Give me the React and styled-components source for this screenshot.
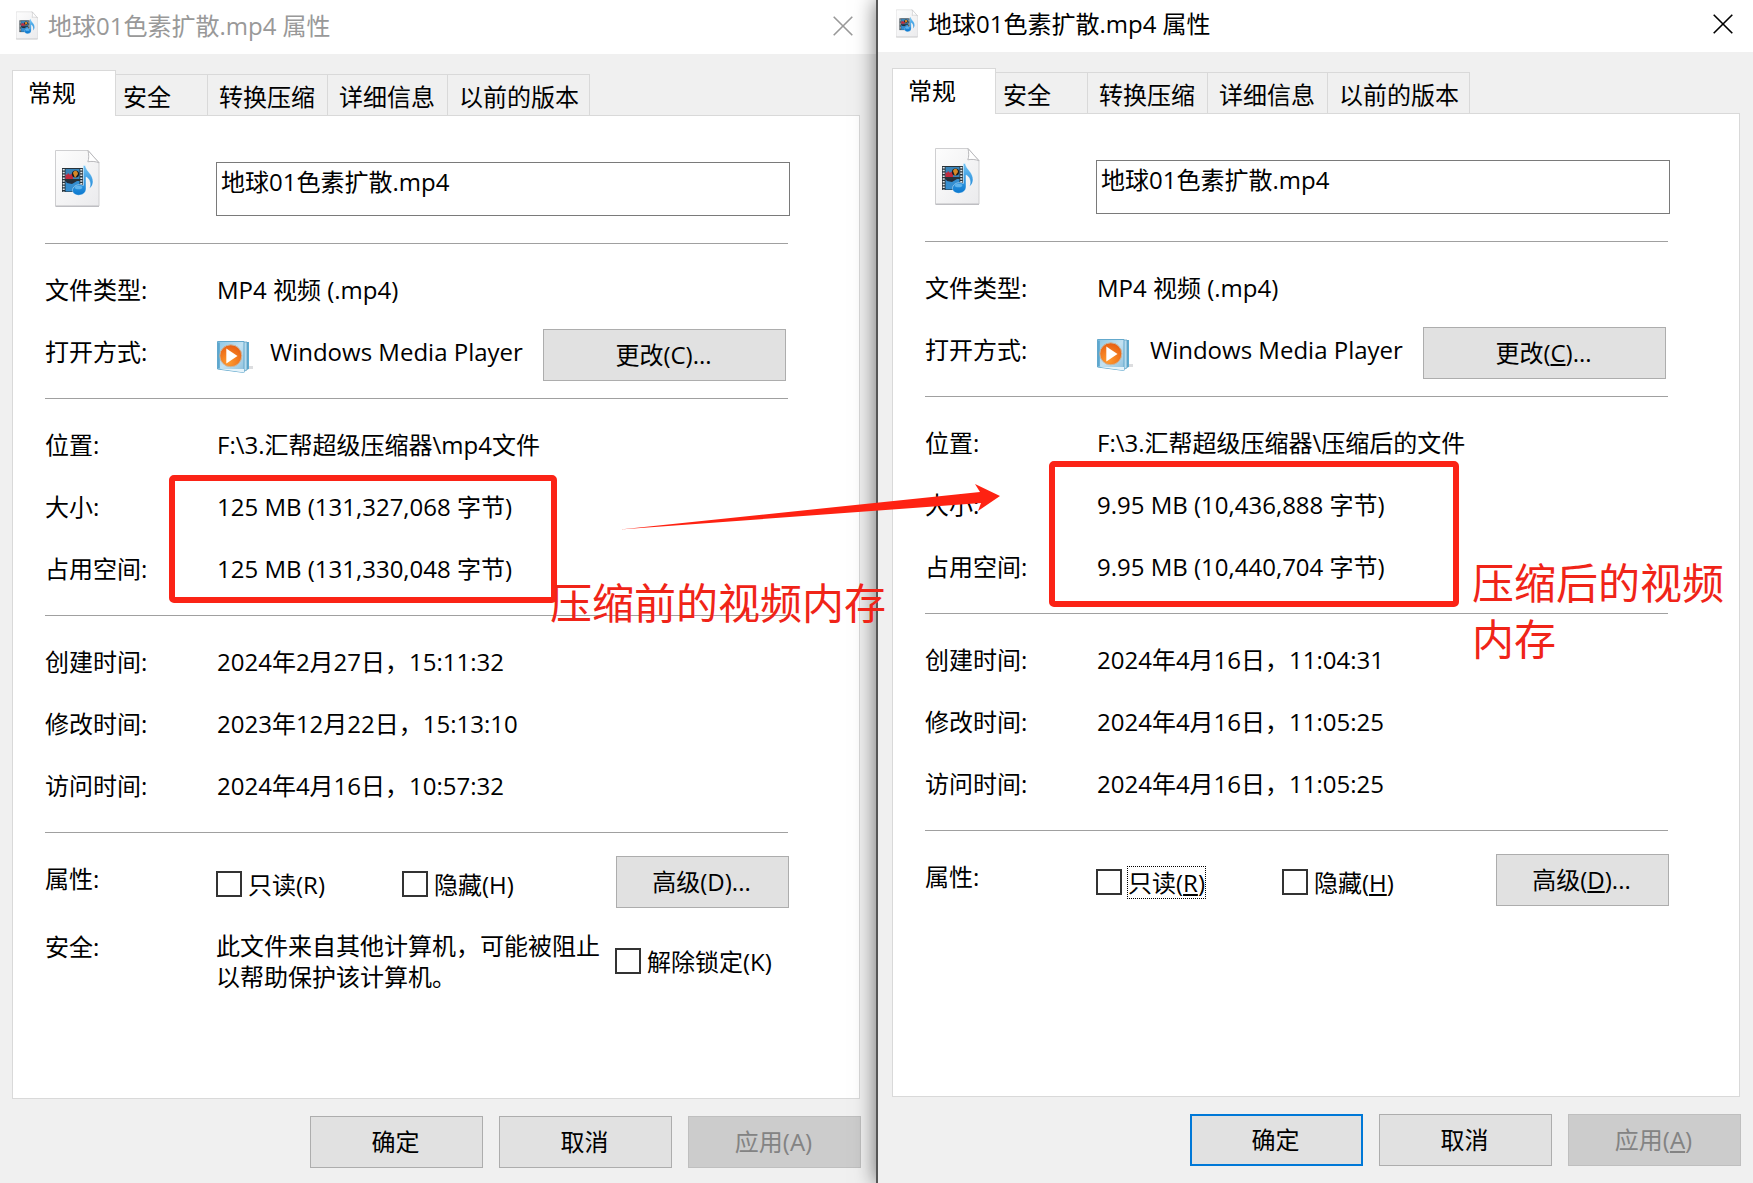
import React, { useState } from 'react';
import styled, { createGlobalStyle } from 'styled-components';

const GlobalStyle = createGlobalStyle`
  * {
    box-sizing: border-box;
  }
  body {
    margin: 0;
    background-color: #f0f0f0;
  }
  body, button, input {
    font-family: 'Open Sans', 'Noto Sans CJK SC', sans-serif;
    font-size: 24px;
    line-height: 32px;
    color: #000;
  }
`;

const Desktop = styled.div`
  display: grid;
  grid-template-columns: 876fr 877fr;
  min-height: 100vh;
  overflow: hidden;
`;

const Window = styled.section`
  display: flex;
  flex-direction: column;
  min-width: 0;
  background-color: #f0f0f0;
  padding-bottom: ${({ $active }) => ($active ? 17 : 15)}px;
  ${({ $active }) =>
    $active &&
    `
    position: relative;
    z-index: 1;
    border-left: 2px solid #565656;
    box-shadow: 0 0 20px rgba(0, 0, 0, 0.55);
  `}
`;

const TitleBar = styled.header`
  display: flex;
  align-items: center;
  height: ${({ $active }) => ($active ? 52 : 54)}px;
  padding: ${({ $active }) => ($active ? '0 20px 5px 18px' : '0 23px 3px 16px')};
  background-color: #fff;
  color: ${({ $active }) => ($active ? '#000' : '#999')};
`;

const Title = styled.h1`
  flex: 1;
  margin: 0 0 0 10px;
  font-size: 24px;
  font-weight: 400;
`;

const CloseButton = styled.button`
  display: flex;
  padding: 0;
  border: none;
  background: none;
  color: inherit;
  cursor: pointer;
`;

const WindowBody = styled.div`
  flex: 1;
  display: flex;
  flex-direction: column;
  padding: ${({ $active }) => ($active ? '16px 13px 0 14px' : '16px 16px 0 12px')};
`;

const TabList = styled.div`
  display: flex;
  align-items: flex-end;
`;

const Tab = styled.button`
  width: ${({ $width }) => $width}px;
  height: 41px;
  padding: 4px 0 0 ${({ $inset }) => $inset}px;
  border: 1px solid #d9d9d9;
  border-left: none;
  border-bottom: none;
  background-color: #f0f0f0;
  text-align: left;
  white-space: nowrap;
  cursor: pointer;
  &[aria-selected='true'] {
    position: relative;
    height: 46px;
    margin-bottom: -1px;
    padding-bottom: 6px;
    border-left: 1px solid #d9d9d9;
    background-color: #fff;
  }
`;

const Panel = styled.div`
  flex: 1;
  padding: 0 71px 0 32px;
  border: 1px solid #d9d9d9;
  background-color: #fff;
`;

const FileHeader = styled.div`
  display: grid;
  grid-template-columns: 171px 1fr;
  align-items: start;
  padding: 34px 0 27px;
  border-bottom: 1px solid #a0a0a0;
  svg {
    margin-left: 10px;
  }
`;

const NameInput = styled.input`
  justify-self: stretch;
  height: 54px;
  margin: 12px -2px 0 0;
  padding: 0 4px 17px;
  border: 1px solid #7a7a7a;
  border-radius: 0;
  outline: none;
`;

const Group = styled.div`
  position: relative;
  padding: 15px 0;
  border-bottom: 1px solid #a0a0a0;
  &:last-child {
    border-bottom: none;
  }
`;

const Row = styled.div`
  display: grid;
  grid-template-columns: 171px 1fr;
  align-items: start;
  line-height: 62px;
`;

const Value = styled.span`
  padding-left: 1px;
  white-space: nowrap;
`;

const OpenWith = styled.div`
  display: flex;
  align-items: center;
  height: 62px;
  padding: 6px 2px 0 1px;
  svg {
    flex: none;
    margin: 4px 17px 0 0;
  }
`;

const AppName = styled.span`
  flex: 1;
  min-width: 0;
  margin-right: 15px;
  padding-bottom: 6px;
  overflow: hidden;
  line-height: 32px;
  white-space: nowrap;
`;

const Attributes = styled.div`
  display: grid;
  grid-template-columns: 186px 1fr auto;
  align-items: center;
  height: 68px;
  margin-right: -1px;
  label {
    padding-top: 4px;
  }
`;

const Security = styled.div`
  display: grid;
  grid-template-columns: 1fr 173px;
  gap: 15px;
  align-items: center;
  padding: 14px 0;
  line-height: 31px;
`;

const SecurityText = styled.p`
  margin: 0;
`;

const CheckLabel = styled.label`
  display: flex;
  align-items: center;
  gap: 5px;
  line-height: 31px;
  white-space: nowrap;
`;

const CheckBox = styled.input`
  flex: none;
  appearance: none;
  width: 26px;
  height: 26px;
  margin: 0;
  border: 2px solid #333;
  background-color: #fff;
  &:checked {
    box-shadow: inset 0 0 0 4px #fff;
    background-color: #333;
  }
`;

const CheckText = styled.span`
  border: 1px dotted ${({ $focused }) => ($focused ? '#000' : 'transparent')};
`;

const Button = styled.button`
  width: ${({ $wide }) => ($wide ? 243 : 173)}px;
  height: 52px;
  flex: none;
  padding: 0 2px 0 0;
  border: ${({ $primary }) => ($primary ? '2px solid #0078d7' : '1px solid #adadad')};
  background-color: #e1e1e1;
  cursor: pointer;
  &:disabled {
    border-color: #bfbfbf;
    background-color: #ccc;
    color: #838383;
    cursor: default;
  }
`;

const Footer = styled.footer`
  display: flex;
  justify-content: flex-end;
  gap: 16px;
  padding: 17px ${({ $active }) => ($active ? 12 : 15)}px 0 0;
`;

const Frame = styled.div`
  position: absolute;
  z-index: 2;
  left: 124px;
  top: ${({ $top }) => $top}px;
  width: ${({ $width }) => $width}px;
  height: ${({ $height }) => $height}px;
  border: 6px solid #fb2316;
  border-radius: 5px;
  pointer-events: none;
`;

const Note = styled.p`
  position: absolute;
  z-index: 2;
  left: ${({ $left }) => $left}px;
  top: ${({ $top }) => $top}px;
  width: ${({ $width }) => $width}px;
  margin: 0;
  font-size: 42px;
  line-height: 56px;
  color: #f02418;
`;

const Arrow = styled.svg`
  position: absolute;
  z-index: 2;
  left: 575px;
  top: 80px;
  pointer-events: none;
`;

const MediaFileIcon = ({ width, height }) => (
  <svg width={width} height={height} viewBox="0 0 45 57" aria-hidden="true">
    <defs>
      <linearGradient id="paper" x1="0" y1="0" x2="1" y2="1">
        <stop offset="0" stopColor="#fdfdfd" />
        <stop offset="1" stopColor="#ebebed" />
      </linearGradient>
      <linearGradient id="note" x1="0" y1="0" x2="0" y2="1">
        <stop offset="0" stopColor="#72c4f5" />
        <stop offset="1" stopColor="#0a78cf" />
      </linearGradient>
    </defs>
    <path d="M.5.5H33L44 12.500V56H.5Z" fill="url(#paper)" stroke="#cfcfd1" />
    <path d="M.5 56.300H44" stroke="#b5b5b8" />
    <path d="M33 .5C34 5 34 9 32.800 11.800C37 11 41 11.500 44 12.800Z" fill="#fff" stroke="#b9b9bc" />
    <path d="M7 18H28V42H7Z" fill="#273239" />
    <path d="M10.500 19H24.500V29H10.500Z" fill="#3a84b8" />
    <path d="M10.500 31H24.500V41.500H10.500Z" fill="#358ed0" />
    <path d="M10.500 24L12 25L13 23L15 25L16.500 23.500L18 26V29H10.500Z" fill="#c22b3e" />
    <circle cx="20.500" cy="24" r="3.600" fill="#1c1a20" />
    <path d="M18 23C19 20 22.500 20 23 24L20 28Z" fill="#d78927" />
    <path d="M10.500 31H22L17 34L12 33Z" fill="#252e3b" />
    <path d="M8.700 19V42M26.300 19V42" stroke="#e2e9ed" strokeWidth="2" strokeDasharray="1.500 1.300" />
    <path
      d="M28.300 15.500H30.300C31 21.500 38.300 24 38 32C37.800 35 36.500 37 34.600 38.500C36.500 32 34 28.500 31 27V39C31 42.500 27.500 45.200 23.500 45.200C20 45.200 17.500 43.200 17.500 40.300C17.500 37 21 34.600 24.700 34.600C26.200 34.600 27.500 35 28.300 35.500Z"
      fill="url(#note)"
      stroke="#fff"
      strokeWidth=".4"
    />
    <ellipse cx="23.500" cy="37.500" rx="3.800" ry="1.800" fill="#9bdcff" opacity=".5" />
  </svg>
);

const PlayerIcon = () => (
  <svg width="36" height="32" viewBox="0 0 36 32" aria-hidden="true">
    <defs>
      <linearGradient id="cover" x1="0" y1="0" x2="1" y2="1">
        <stop offset="0" stopColor="#8cc6e4" />
        <stop offset=".5" stopColor="#c3e2f2" />
        <stop offset="1" stopColor="#8dbfdc" />
      </linearGradient>
      <radialGradient id="disc" cx=".4" cy=".8" r=".8">
        <stop offset="0" stopColor="#ff9b2f" />
        <stop offset="1" stopColor="#e85f13" />
      </radialGradient>
    </defs>
    <path d="M30 25H36V28H30Z" fill="#dcdddf" />
    <path d="M25 1H32V28L25 30Z" fill="#5fa9ce" />
    <path d="M25 1H30V29L25 31Z" fill="#b8dcee" stroke="#5398bd" strokeWidth=".7" />
    <path d="M.5 .5H27V31.500L.5 28Z" fill="url(#cover)" stroke="#64a9cd" />
    <path d="M1.800 1.500V27.500" stroke="#5ca7cf" strokeWidth="2" />
    <path d="M3 28L27 28V31.500Z" fill="#e5f3fa" />
    <circle cx="13.800" cy="14.800" r="11" fill="url(#disc)" stroke="#c8b5a0" />
    <path d="M9.300 7.500L20.500 15L9.300 22.500Z" fill="#fff" />
  </svg>
);

const CloseIcon = () => (
  <svg width="20" height="20" viewBox="0 0 20 20" stroke="currentColor" strokeWidth="1.600">
    <path d="M.7.7L19.300 19.300M19.300.7L.7 19.300" />
  </svg>
);

const tabs = [
  { name: '常规', width: 104, inset: 15 },
  { name: '安全', width: 92, inset: 7 },
  { name: '转换压缩', width: 120, inset: 11 },
  { name: '详细信息', width: 120, inset: 11 },
  { name: '以前的版本', width: 142, inset: 11 },
];

// The access key is underlined only in the focused window
const AccessKey = ({ letter, active }) => <>({active ? <u>{letter}</u> : letter})</>;

const InfoRow = ({ label, value }) => (
  <Row>
    <span>{label}:</span>
    <Value>{value}</Value>
  </Row>
);

const PropertiesWindow = ({ active, file, blocked, children }) => {
  const [tab, setTab] = useState('常规');
  const [name, setName] = useState('地球01色素扩散.mp4');

  return (
    <Window $active={active}>
      <TitleBar $active={active}>
        <MediaFileIcon width={22} height={29} />
        <Title>地球01色素扩散.mp4 属性</Title>
        <CloseButton aria-label="关闭">
          <CloseIcon />
        </CloseButton>
      </TitleBar>
      <WindowBody $active={active}>
        <TabList role="tablist">
          {tabs.map((t) => (
            <Tab
              key={t.name}
              role="tab"
              aria-selected={tab === t.name}
              onClick={() => setTab(t.name)}
              $width={t.width}
              $inset={t.inset}
            >
              {t.name}
            </Tab>
          ))}
        </TabList>
        <Panel role="tabpanel">
          <FileHeader>
            <MediaFileIcon width={45} height={57} />
            <NameInput aria-label="文件名" value={name} onChange={(e) => setName(e.target.value)} />
          </FileHeader>
          <Group>
            <InfoRow label="文件类型" value="MP4 视频 (.mp4)" />
            <Row>
              <span>打开方式:</span>
              <OpenWith>
                <PlayerIcon />
                <AppName>Windows Media Player</AppName>
                <Button $wide>
                  更改<AccessKey letter="C" active={active} />...
                </Button>
              </OpenWith>
            </Row>
          </Group>
          <Group>
            <InfoRow label="位置" value={file.path} />
            <InfoRow label="大小" value={file.size} />
            <InfoRow label="占用空间" value={file.sizeOnDisk} />
            {children}
          </Group>
          <Group>
            <InfoRow label="创建时间" value={file.created} />
            <InfoRow label="修改时间" value={file.modified} />
            <InfoRow label="访问时间" value={file.accessed} />
          </Group>
          <Group>
            <Row>
              <span>属性:</span>
              <Attributes>
                <CheckLabel>
                  <CheckBox type="checkbox" />
                  <CheckText $focused={active}>
                    只读<AccessKey letter="R" active={active} />
                  </CheckText>
                </CheckLabel>
                <CheckLabel>
                  <CheckBox type="checkbox" />
                  <CheckText>
                    隐藏<AccessKey letter="H" active={active} />
                  </CheckText>
                </CheckLabel>
                <Button>
                  高级<AccessKey letter="D" active={active} />...
                </Button>
              </Attributes>
            </Row>
            {blocked && (
              <Row>
                <span>安全:</span>
                <Security>
                  <SecurityText>此文件来自其他计算机，可能被阻止以帮助保护该计算机。</SecurityText>
                  <CheckLabel>
                    <CheckBox type="checkbox" />
                    <CheckText>
                      解除锁定<AccessKey letter="K" active={active} />
                    </CheckText>
                  </CheckLabel>
                </Security>
              </Row>
            )}
          </Group>
        </Panel>
      </WindowBody>
      <Footer $active={active}>
        <Button $primary={active}>确定</Button>
        <Button>取消</Button>
        <Button disabled>
          应用<AccessKey letter="A" active={active} />
        </Button>
      </Footer>
    </Window>
  );
};

const before = {
  path: 'F:\\3.汇帮超级压缩器\\mp4文件',
  size: '125 MB (131,327,068 字节)',
  sizeOnDisk: '125 MB (131,330,048 字节)',
  created: '2024年2月27日，15:11:32',
  modified: '2023年12月22日，15:13:10',
  accessed: '2024年4月16日，10:57:32',
};

const after = {
  path: 'F:\\3.汇帮超级压缩器\\压缩后的文件',
  size: '9.95 MB (10,436,888 字节)',
  sizeOnDisk: '9.95 MB (10,440,704 字节)',
  created: '2024年4月16日，11:04:31',
  modified: '2024年4月16日，11:05:25',
  accessed: '2024年4月16日，11:05:25',
};

const App = () => (
  <>
    <GlobalStyle />
    <Desktop>
      <PropertiesWindow file={before} blocked>
        <Frame $top={76} $width={388} $height={128} />
        <Arrow width="382" height="54" viewBox="0 0 382 54" aria-hidden="true">
          <path d="M0 50.500L360 13L355 5L380 17L358 32L361 24Z" fill="#fe2212" />
        </Arrow>
        <Note $left={505} $top={176} $width={340}>
          压缩前的视频内存
        </Note>
      </PropertiesWindow>
      <PropertiesWindow file={after} active>
        <Frame $top={64} $width={410} $height={146} />
        <Note $left={547} $top={158} $width={260}>
          压缩后的视频内存
        </Note>
      </PropertiesWindow>
    </Desktop>
  </>
);

export default App;
